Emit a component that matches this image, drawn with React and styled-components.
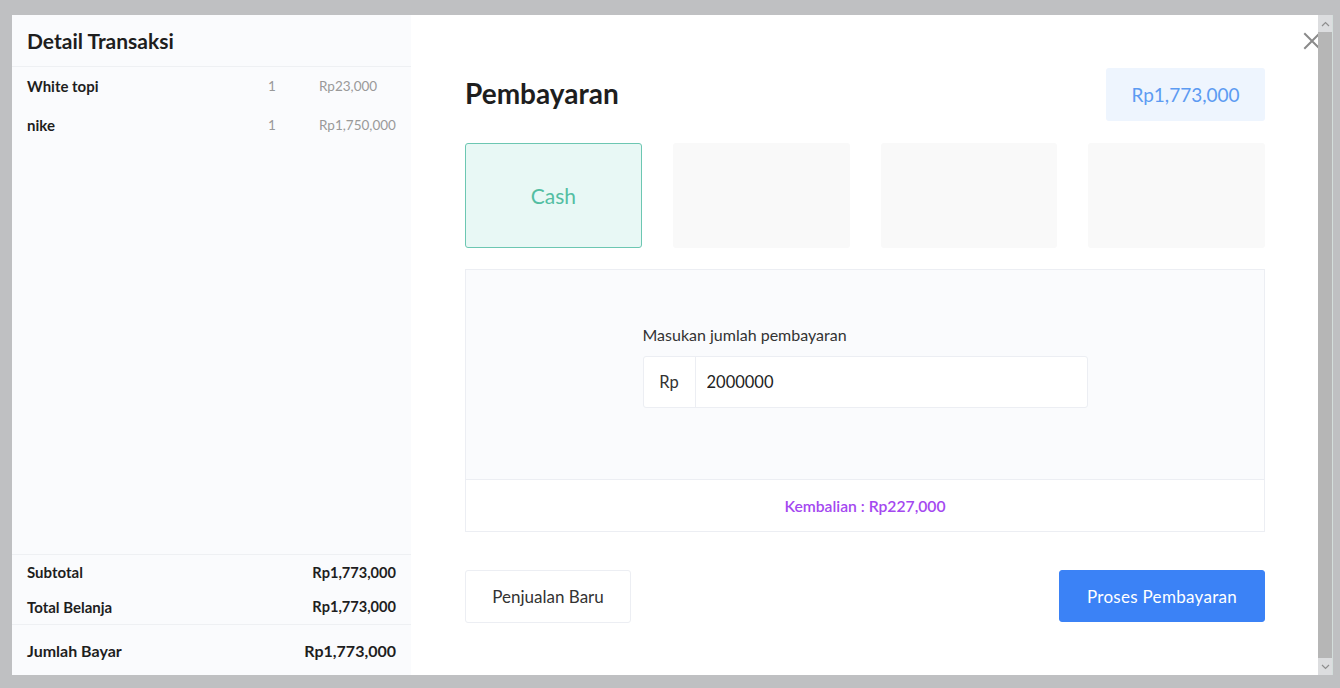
import React from "react";
import styled, { createGlobalStyle } from "styled-components";

const Global = createGlobalStyle`
  html, body { margin: 0; padding: 0; }
  body {
    background: #bfc0c2;
    font-family: Lato, "Open Sans", Arial, sans-serif;
    color: #222;
    overflow: hidden;
  }
  * { box-sizing: border-box; }
`;

const Stage = styled.div`
  width: 1340px;
  height: 688px;
  padding: 15px 7px 13px 12px;
`;

const Modal = styled.div`
  position: relative;
  width: 1321px;
  height: 660px;
  background: #fff;
  display: flex;
`;

const Body = styled.div`
  flex: 1;
  display: flex;
  height: 100%;
  min-width: 0;
`;

const ScrollTrack = styled.div`
  position: relative;
  z-index: 2;
  width: 15px;
  flex-shrink: 0;
  display: flex;
  flex-direction: column;
  background: #b6b6b6;
  border-right: 1px solid #d3dedb;
`;

const ScrollArrow = styled.div`
  height: 17px;
  background: #dcdddf;
  display: flex;
  align-items: center;
  justify-content: center;
`;

const ScrollThumb = styled.div`
  flex: 1;
  background: #b6b6b6;
`;

const Side = styled.aside`
  width: 399px;
  flex-shrink: 0;
  background: #fafbfd;
  display: flex;
  flex-direction: column;
`;

const SideHeader = styled.div`
  height: 52px;
  padding: 0 15px 1px;
  display: flex;
  align-items: center;
  border-bottom: 1px solid #eef0f3;
  font-size: 21px;
  font-weight: 700;
  color: #1e1e1e;
`;

const Items = styled.div`
  flex: 1;
`;

const ItemRow = styled.div`
  display: grid;
  grid-template-columns: 1fr 51px 77px;
  align-items: center;
  height: 39px;
  padding: 0 15px 1px;
`;

const ItemName = styled.span`
  font-size: 15px;
  font-weight: 700;
  color: #1e1e1e;
`;

const Muted = styled.span`
  color: #999;
  font-size: 13.5px;
  white-space: nowrap;
`;

const Summary = styled.div`
  border-top: 1px solid #eef0f3;
`;

const SumRow = styled.div`
  display: flex;
  justify-content: space-between;
  align-items: center;
  height: ${(p) => p.$h || 35}px;
  padding: 0 15px;
  font-size: ${(p) => p.$size || 15}px;
  font-weight: 700;
  color: #1e1e1e;
  border-top: ${(p) => (p.$divided ? "1px solid #eef0f3" : "none")};
`;

const Value = styled.span`
  font-size: ${(p) => p.$size || 14.6}px;
`;

const Main = styled.main`
  flex: 1;
  padding: 53px 53px 0 54px;
  display: flex;
  flex-direction: column;
`;

const TopRow = styled.div`
  display: flex;
  justify-content: space-between;
  align-items: center;
  height: 53px;
`;

const Title = styled.h1`
  margin: 0 0 3px;
  font-size: 28px;
  font-weight: 700;
  color: #1e1e1e;
`;

const TotalBadge = styled.div`
  width: 159px;
  height: 53px;
  border-radius: 3px;
  background: #eef5fe;
  color: #5c9bf2;
  font-size: 19px;
  display: flex;
  align-items: center;
  justify-content: center;
`;

const Methods = styled.div`
  display: grid;
  grid-template-columns: repeat(4, 1fr);
  gap: 31px;
  margin-top: 22px;
`;

const Method = styled.div`
  height: 105px;
  border-radius: 3px;
  border: 1px solid ${(p) => (p.$active ? "#6cc7b2" : "transparent")};
  background: ${(p) => (p.$active ? "#e8f8f5" : "#f9f9f9")};
  color: #53bea2;
  font-size: 21px;
  display: flex;
  align-items: center;
  justify-content: center;
`;

const PayBox = styled.div`
  margin-top: 21px;
  border: 1px solid #eceef3;
`;

const PayInputArea = styled.div`
  height: 210px;
  background: #fafbfd;
  border-bottom: 1px solid #eceef3;
  padding-top: 55px;
  display: flex;
  justify-content: center;
`;

const Field = styled.div`
  width: 445px;
`;

const Label = styled.div`
  font-size: 16px;
  color: #333;
  line-height: 20px;
  margin-bottom: 11px;
`;

const InputGroup = styled.div`
  display: flex;
  height: 52px;
  background: #fff;
  border: 1px solid #eceef3;
  border-radius: 3px;
`;

const Addon = styled.div`
  width: 52px;
  border-right: 1px solid #eceef3;
  display: flex;
  align-items: center;
  justify-content: center;
  font-size: 16.5px;
  color: #333;
`;

const Input = styled.input`
  flex: 1;
  border: none;
  outline: none;
  background: transparent;
  padding: 0 11px;
  font-family: inherit;
  font-size: 16.5px;
  color: #222;
`;

const Change = styled.div`
  height: 51px;
  display: flex;
  align-items: center;
  justify-content: center;
  font-size: 15.7px;
  font-weight: 600;
  color: #a448f0;
`;

const Actions = styled.div`
  margin-top: 38px;
  display: flex;
  justify-content: space-between;
  align-items: flex-start;
`;

const Button = styled.button`
  height: ${(p) => (p.$primary ? 52 : 53)}px;
  width: ${(p) => (p.$primary ? 206 : 166)}px;
  border-radius: 3px;
  border: 1px solid ${(p) => (p.$primary ? "#3b82f6" : "#eceef3")};
  background: ${(p) => (p.$primary ? "#3b82f6" : "#fff")};
  color: ${(p) => (p.$primary ? "#fff" : "#333")};
  font-family: inherit;
  font-size: 17px;
  letter-spacing: ${(p) => (p.$primary ? "0.3px" : "0")};
  cursor: pointer;
`;

const Close = styled.button`
  position: absolute;
  z-index: 1;
  top: 17px;
  left: 1291px;
  width: 18px;
  height: 18px;
  padding: 0;
  border: none;
  background: none;
  cursor: pointer;
  display: flex;
`;

const items = [
  { name: "White topi", qty: 1, price: "Rp23,000" },
  { name: "nike", qty: 1, price: "Rp1,750,000" },
];

const Chevron = ({ up }) => (
  <svg width="9" height="6" viewBox="0 0 9 6">
    <path
      d={up ? "M1 5 L4.5 1.5 L8 5" : "M1 1 L4.5 4.5 L8 1"}
      stroke="#8e8e8e"
      strokeWidth="1.2"
      fill="none"
    />
  </svg>
);

export default function App() {
  return (
    <>
      <Global />
      <Stage>
        <Modal>
          <Body>
            <Side>
              <SideHeader>Detail Transaksi</SideHeader>
              <Items>
                {items.map((it) => (
                  <ItemRow key={it.name}>
                    <ItemName>{it.name}</ItemName>
                    <Muted>{it.qty}</Muted>
                    <Muted>{it.price}</Muted>
                  </ItemRow>
                ))}
              </Items>
              <Summary>
                <SumRow $h={34}>
                  <span>Subtotal</span>
                  <Value>Rp1,773,000</Value>
                </SumRow>
                <SumRow $h={35}>
                  <span>Total Belanja</span>
                  <Value>Rp1,773,000</Value>
                </SumRow>
                <SumRow $divided $h={51} $size={16}>
                  <span>Jumlah Bayar</span>
                  <Value $size={16}>Rp1,773,000</Value>
                </SumRow>
              </Summary>
            </Side>
            <Main>
              <TopRow>
                <Title>Pembayaran</Title>
                <TotalBadge>Rp1,773,000</TotalBadge>
              </TopRow>
              <Methods>
                <Method $active>Cash</Method>
                <Method />
                <Method />
                <Method />
              </Methods>
              <PayBox>
                <PayInputArea>
                  <Field>
                    <Label>Masukan jumlah pembayaran</Label>
                    <InputGroup>
                      <Addon>Rp</Addon>
                      <Input defaultValue="2000000" />
                    </InputGroup>
                  </Field>
                </PayInputArea>
                <Change>Kembalian : Rp227,000</Change>
              </PayBox>
              <Actions>
                <Button>Penjualan Baru</Button>
                <Button $primary>Proses Pembayaran</Button>
              </Actions>
            </Main>
          </Body>
          <Close aria-label="Tutup">
            <svg width="18" height="18" viewBox="0 0 18 18">
              <path d="M2 2 L16 16 M16 2 L2 16" stroke="#8a8a8a" strokeWidth="2" strokeLinecap="square" />
            </svg>
          </Close>
          <ScrollTrack>
            <ScrollArrow>
              <Chevron up />
            </ScrollArrow>
            <ScrollThumb />
            <ScrollArrow>
              <Chevron />
            </ScrollArrow>
          </ScrollTrack>
        </Modal>
      </Stage>
    </>
  );
}
